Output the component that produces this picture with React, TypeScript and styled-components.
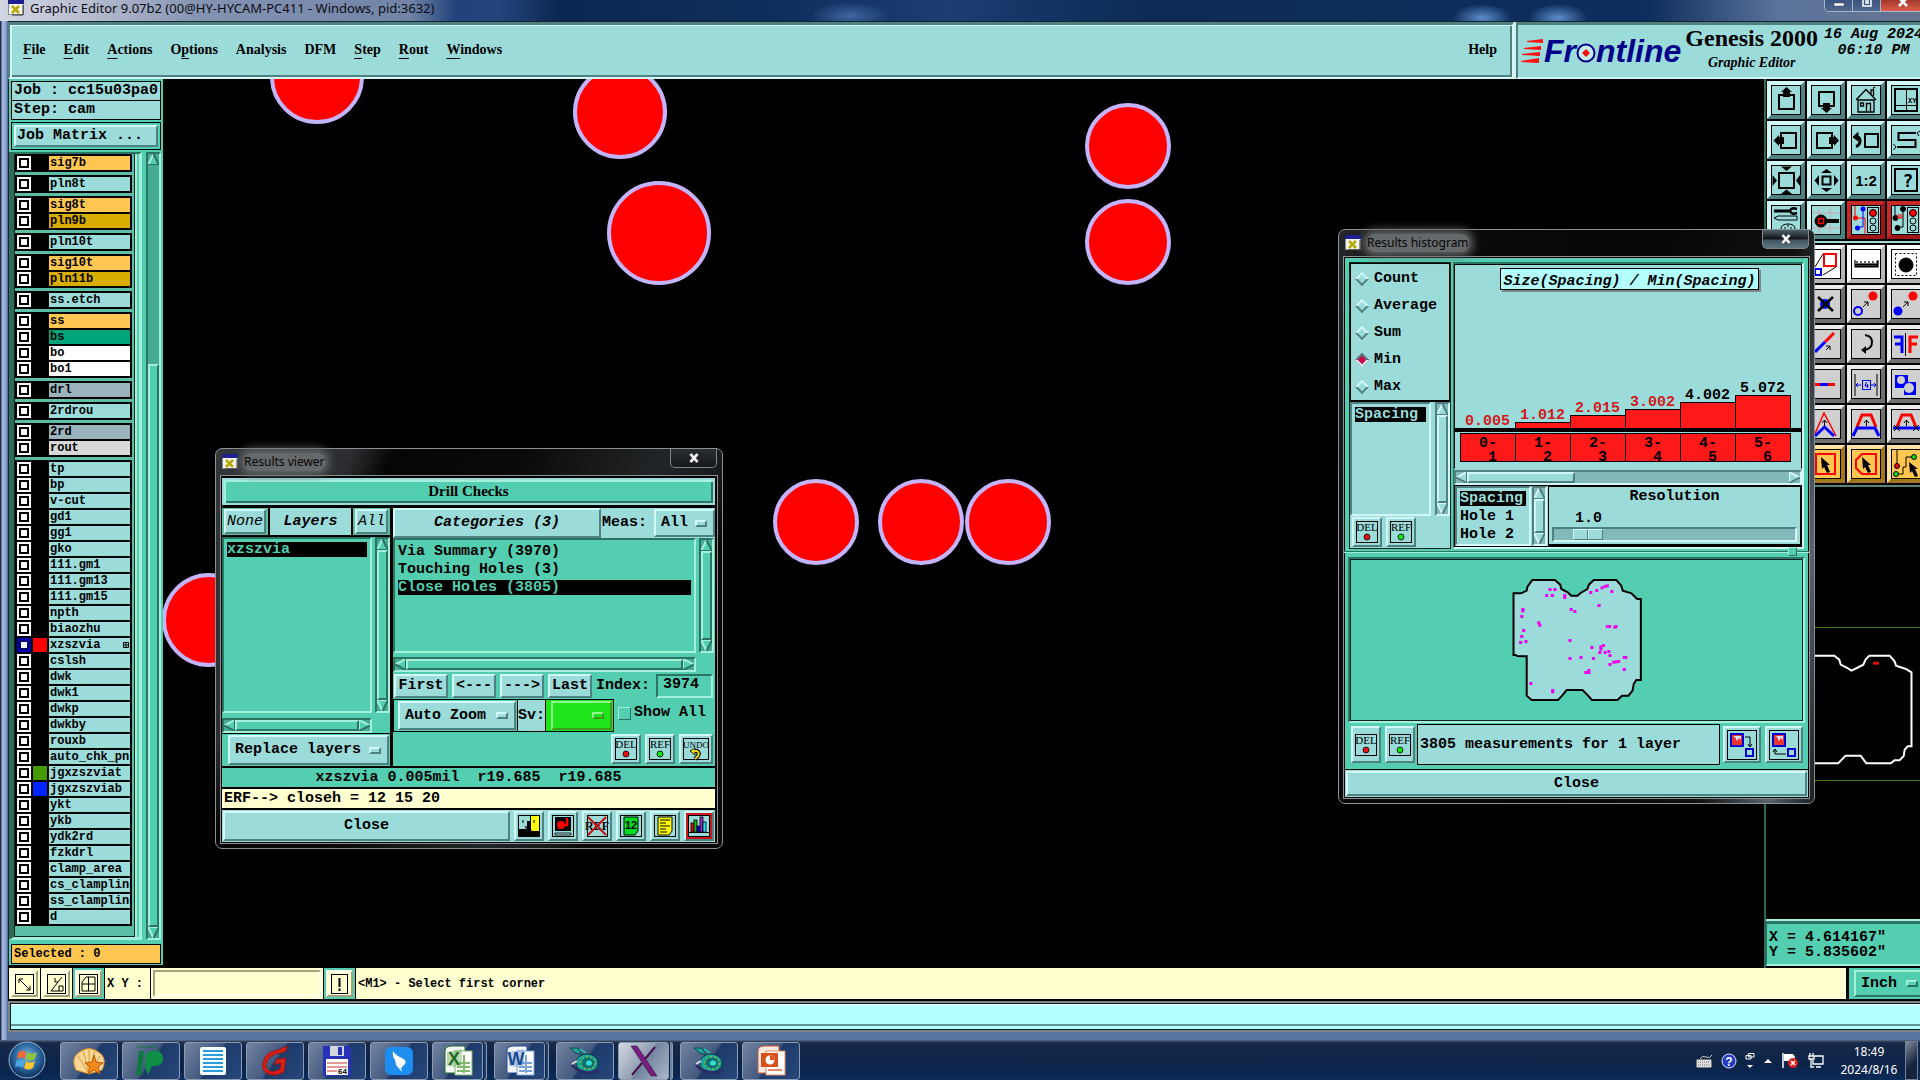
import React from 'react';
import styled, { createGlobalStyle, css } from 'styled-components';

const MONO = '"Liberation Mono", "Courier New", monospace';
const SERIF = '"Liberation Serif", "Times New Roman", serif';
const UI = '"Noto Sans", "Open Sans", sans-serif';

type Tone = { face: string; hi: string; lo: string; trough: string };
const TONES: Record<string, Tone> = {
  aqua: { face: '#9bdbda', hi: '#d2f8f7', lo: '#4f8183', trough: '#84b8ba' },
  green: { face: '#53ceb0', hi: '#a4f0dc', lo: '#2b7462', trough: '#45ab92' },
  lime: { face: '#1ee61a', hi: '#8ff58c', lo: '#3f9a1f', trough: '#1ab517' },
  cream: { face: '#ffffd0', hi: '#ffffef', lo: '#a3a384', trough: '#d0d0a0' },
  grey: { face: '#cfcfcf', hi: '#ededed', lo: '#6f6f6f', trough: '#aaaaaa' },
  white: { face: '#ffffff', hi: '#ffffff', lo: '#b5b5b5', trough: '#dddddd' },
  orange: { face: '#ffc651', hi: '#ffe2a2', lo: '#a37620', trough: '#dda030' },
  red: { face: '#9bdbda', hi: '#d2f8f7', lo: '#4f8183', trough: '#84b8ba' },
};
type ToneProp = { $tone?: string };
const toneOf = (p: ToneProp) => TONES[p.$tone ?? 'aqua'];

const raised = css<ToneProp>`
  border: 2px solid;
  border-color: ${(p) => `${toneOf(p).hi} ${toneOf(p).lo} ${toneOf(p).lo} ${toneOf(p).hi}`};
`;
const sunken = css<ToneProp>`
  border: 2px solid;
  border-color: ${(p) => `${toneOf(p).lo} ${toneOf(p).hi} ${toneOf(p).hi} ${toneOf(p).lo}`};
`;

const Global = createGlobalStyle`
  *, *::before, *::after { box-sizing: border-box; }
  html, body { margin: 0; background: #000; }
  body { font: bold 15px/18px ${MONO}; color: #000; overflow: hidden; }
  button, select, input { font: inherit; color: inherit; margin: 0; border-radius: 0; }
  button, select { cursor: default; }
  svg { display: block; }
  ul { list-style: none; margin: 0; padding: 0; }
`;

/* ---------- desktop and main window ---------- */

const Desktop = styled.div`
  position: relative;
  display: flex;
  flex-direction: column;
  min-height: 100vh;
  overflow: hidden;
  background: #000;
`;

const MainWindow = styled.div`
  flex: 1;
  display: flex;
  flex-direction: column;
  margin-right: -6px;
  padding: 0 0 8px 8px;
  background: linear-gradient(90deg, #1b2c4a 0, #1b2c4a 1px, #a9bbdc 2px, #8ca4d2 6px, #5a74a0 7px, #5a74a0 100%);
`;

const TitleBar = styled.header`
  display: flex;
  align-items: flex-start;
  height: 21px;
  margin-left: -8px;
  padding: 0 0 0 8px;
  background:
    radial-gradient(ellipse 40px 14px at 850px 16px, #3f669e, transparent),
    radial-gradient(ellipse 30px 14px at 1482px 18px, #5c8dc8, transparent),
    radial-gradient(ellipse 30px 14px at 1558px 18px, #5c8dc8, transparent),
    linear-gradient(90deg, #d3d6e2 0, #b6bccf 90px, #8593b2 200px, #7184a6 410px, #21427a 455px, #23457c 500px, #0a2751 560px, #0d2d5c 760px, #1b3d70 950px, #0b2a57 1150px, #0d2e5e 1650px, #5c749c 1780px, #66748f 1926px);
`;
const TitleText = styled.h1`
  flex: 1;
  margin: 0 0 0 6px;
  font: normal 13px/16px ${UI};
  color: #0b0b14;
`;
const CaptionButtons = styled.div`
  display: flex;
  height: 12px;
  border: 1px solid #a8b6cc;
  border-top: 0;
  border-radius: 0 0 0 5px;
  overflow: hidden;
`;
const CaptionButton = styled.button<{ $w: number; $close?: boolean }>`
  width: ${(p) => p.$w}px;
  padding: 0;
  border: 0;
  border-right: 1px solid #a8b6cc;
  display: flex;
  justify-content: center;
  background: ${(p) => (p.$close ? 'linear-gradient(#a3372b, #d9604c)' : 'linear-gradient(#3b5480, #4f6890)')};
`;

const MenuRow = styled.div`
  display: flex;
  height: 58px;
  border-top: 1px solid #16242c;
  background: #d2eeee;
`;
const MenuBar = styled.nav`
  flex: 1;
  display: flex;
  align-items: center;
  gap: 18px;
  margin-right: 2px;
  padding: 0 15px 3px 13px;
  font: bold 14px/18px ${SERIF};
  background: #9bdbda;
  border: solid;
  border-width: 3px 2px 2px 2px;
  border-color: #4f8183 #d2f8f7 #d2f8f7 #4f8183;
  box-shadow: inset 2px 1px 0 #d2f8f7, inset -2px -2px 0 #4f8183;
  u { text-decoration-thickness: 1px; text-underline-offset: 4px; }
`;
const MenuItem = styled.button<{ $end?: boolean }>`
  padding: 0;
  border: 0;
  background: none;
  ${(p) => p.$end && 'margin-left: auto;'}
`;
const Brand = styled.div`
  width: 410px;
  display: flex;
  align-items: flex-start;
  background: #9bdbda;
  border: solid;
  border-width: 3px 0 2px 2px;
  border-color: #4f8183 #d2f8f7 #d2f8f7 #4f8183;
`;
const LogoWord = styled.div`
  display: flex;
  align-items: center;
  padding: 9px 0 0 3px;
  font: italic bold 32px/34px "Liberation Sans", Arial, sans-serif;
  color: #00008b;
`;
const Product = styled.div`
  margin: 0 0 0 4px;
  text-align: center;
  font: bold 24px/26px ${SERIF};
  small { display: block; font: italic bold 14px/24px ${SERIF}; }
`;
const DateBox = styled.div`
  margin: 2px 0 0 6px;
  text-align: center;
  font-style: italic;
  line-height: 16px;
  white-space: pre;
`;

const Work = styled.main`
  flex: 1;
  display: flex;
  background: #000;
`;

/* ---------- layer sidebar ---------- */

const Sidebar = styled.aside`
  flex: none;
  width: 155px;
  display: flex;
  flex-direction: column;
  margin-bottom: 3px;
  padding: 2px 0 2px;
  background: #53ceb0;
  border-left: 1px solid #16242c;
`;
const InfoBox = styled.div<{ $fill?: string; $small?: boolean }>`
  margin: 0 2px -1px;
  padding: 0 1px 0 2px;
  height: 20px;
  font-size: ${(p) => (p.$small ? 12 : 15)}px;
  line-height: 18px;
  border: 1px solid #000;
  background: ${(p) => p.$fill ?? '#9bdbda'};
  white-space: nowrap;
  overflow: hidden;
`;
const MatrixFrame = styled.div`
  margin: 3px 2px 2px;
  padding: 2px;
  border: 1px solid #000;
`;
const MatrixButton = styled.button`
  ${raised}
  display: block;
  width: 100%;
  height: 22px;
  padding: 0 1px;
  text-align: left;
  line-height: 18px;
  background: #9bdbda;
`;
const LayerPanel = styled.div`
  flex: 1;
  display: flex;
  gap: 4px;
  margin-bottom: 4px;
  padding-right: 2px;
`;
const LayerFrame = styled.div`
  flex: 1;
  min-width: 0;
  padding-right: 4px;
  border: solid;
  border-width: 2px 3px 3px 5px;
  border-color: #2b7462 #a4f0dc #a4f0dc #2f6a5b;
`;
const LayerList = styled.div`
  height: 100%;
  display: flex;
  flex-direction: column;
  gap: 3px;
  padding-right: 2px;
  background: #5bbfa5;
  border: 1px solid #10251f;
  border-top: 0;
  box-shadow: 2px 0 0 #a4f0dc;
`;
const LayerGroup = styled.ul`
  display: flex;
  flex-direction: column;
  gap: 2px;
  padding: 2px;
  background: #000;
`;
const LayerRow = styled.li`
  display: flex;
  gap: 2px;
  height: 14px;
`;
const LayerCheck = styled.input<{ $active?: boolean }>`
  appearance: none;
  flex: none;
  width: 14px;
  height: 14px;
  background: #fff;
  border: 2px solid ${(p) => (p.$active ? '#0000b4' : '#fff')};
  box-shadow: inset 0 0 0 2px ${(p) => (p.$active ? '#00006e' : '#000')};
`;
const Swatch = styled.span<{ $color: string }>`
  flex: none;
  width: 14px;
  background: ${(p) => p.$color};
`;
const LayerName = styled.label<{ $fill: string }>`
  flex: 1;
  display: flex;
  justify-content: space-between;
  align-items: center;
  min-width: 0;
  padding-left: 1px;
  font-size: 12px;
  line-height: 14px;
  background: ${(p) => p.$fill};
  overflow: hidden;
  white-space: nowrap;
`;

/* ---------- shared Motif parts ---------- */

const BarTrack = styled.div<ToneProp & { $v: boolean }>`
  ${sunken}
  flex: none;
  display: flex;
  flex-direction: ${(p) => (p.$v ? 'column' : 'row')};
  ${(p) => (p.$v ? 'width: 15px;' : 'height: 15px;')}
  background: ${(p) => toneOf(p).trough};
`;
const BarArrow = styled.button`
  flex: none;
  padding: 0;
  border: 0;
  width: 11px;
  height: 11px;
  background: none;
`;
const BarThumb = styled.div<ToneProp & { $grow: number }>`
  ${raised}
  flex: ${(p) => p.$grow} 1 0;
  margin: 0;
  background: ${(p) => toneOf(p).face};
`;
const BarSpace = styled.div<{ $grow: number }>`
  flex: ${(p) => p.$grow} 1 0;
`;

const ARROWS: Record<string, [string, string, string]> = {
  up: ['M5.5 0L11 11H0Z', 'M0 11L5.5 0', 'M5.5 0L11 11H0'],
  down: ['M0 0H11L5.5 11Z', 'M5.5 11L0 0H11', 'M11 0L5.5 11'],
  left: ['M11 0V11L0 5.5Z', 'M0 5.5L11 0', 'M11 0V11L0 5.5'],
  right: ['M0 0L11 5.5L0 11Z', 'M0 11V0L11 5.5', 'M11 5.5L0 11'],
};
function Arrow({ dir, tone }: { dir: string; tone: string }) {
  const t = TONES[tone];
  const [fill, hi, lo] = ARROWS[dir];
  return (
    <BarArrow aria-label={`Scroll ${dir}`}>
      <svg width="11" height="11" viewBox="0 0 11 11">
        <path d={fill} fill={t.face} />
        <path d={hi} fill="none" stroke={t.hi} strokeWidth="2" />
        <path d={lo} fill="none" stroke={t.lo} strokeWidth="2" />
      </svg>
    </BarArrow>
  );
}
function Scroll({ v = false, tone = 'aqua', before = 0, size = 1, after = 0 }: { v?: boolean; tone?: string; before?: number; size?: number; after?: number }) {
  return (
    <BarTrack $v={v} $tone={tone}>
      <Arrow dir={v ? 'up' : 'left'} tone={tone} />
      {before > 0 && <BarSpace $grow={before} />}
      <BarThumb $tone={tone} $grow={size} />
      {after > 0 && <BarSpace $grow={after} />}
      <Arrow dir={v ? 'down' : 'right'} tone={tone} />
    </BarTrack>
  );
}

const PushButton = styled.button<ToneProp & { $italic?: boolean; $light?: boolean; $grow?: boolean }>`
  ${raised}
  padding: 0 1px;
  line-height: 18px;
  white-space: nowrap;
  background: ${(p) => toneOf(p).face};
  ${(p) => p.$italic && 'font-style: italic;'}
  ${(p) => p.$light && 'font-weight: normal;'}
  ${(p) => p.$grow && 'flex: 1;'}
`;
const OptionBox = styled.div<ToneProp>`
  ${raised}
  display: flex;
  align-items: center;
  padding: 0 6px 0 5px;
  background: ${(p) => toneOf(p).face};
`;
const OptionSelect = styled.select`
  appearance: none;
  flex: 1;
  min-width: 0;
  padding: 0;
  border: 0;
  background: none;
  outline: none;
`;
const OptionMark = styled.span<ToneProp>`
  ${raised}
  width: 12px;
  height: 7px;
`;
function OptionMenu({ label, value, tone = 'aqua' }: { label: string; value: string; tone?: string }) {
  return (
    <OptionBox $tone={tone}>
      <OptionSelect aria-label={label} defaultValue={value}>
        <option>{value}</option>
      </OptionSelect>
      <OptionMark $tone={tone} />
    </OptionBox>
  );
}

const ListFrame = styled.ul<ToneProp & { $tight?: boolean }>`
  ${sunken}
  min-width: 0;
  padding: ${(p) => (p.$tight ? 3 : 4)}px 3px 2px 3px;
  display: flex;
  flex-direction: column;
  gap: 3px;
  background: ${(p) => toneOf(p).face};
`;
const ListChoice = styled.button<ToneProp & { $on?: boolean }>`
  display: block;
  width: 100%;
  height: 15px;
  padding: 0;
  border: 0;
  text-align: left;
  line-height: 15px;
  white-space: nowrap;
  background: ${(p) => (p.$on ? '#000' : 'none')};
  color: ${(p) => (p.$on ? toneOf(p).face : '#000')};
`;

const IconButton = styled.button<ToneProp & { $tall?: boolean; $w?: number; $alert?: boolean }>`
  ${raised}
  flex: none;
  width: ${(p) => p.$w ?? 30}px;
  height: ${(p) => (p.$tall ? 37 : 30)}px;
  padding: 0;
  display: flex;
  align-items: center;
  justify-content: center;
  background: ${(p) => (p.$alert ? '#c8191b' : '#9bdbda')};
`;

function TagIcon({ text, color }: { text: string; color: string }) {
  const w = text.length > 3 ? 28 : 24;
  return (
    <svg width={w} height="24" viewBox={`0 0 ${w} 24`} fontFamily={SERIF} fontSize={text.length > 3 ? 9 : 11} textAnchor="middle">
      <rect x="1.500" y="1.500" width={w - 3} height="21" fill="none" stroke="#000" />
      <text x={w / 2} y="11" fontWeight="normal">{text}</text>
      {color === 'undo' ? (
        <>
          <path d="M11 14H15Q18 16 16 19L13 22" fill="none" stroke="#000" strokeWidth="4" />
          <path d="M13 11L8 14L13 18Z" fill="#e8d810" stroke="#000" strokeWidth="0.800" />
          <path d="M11 14H15Q18 16 16 19L13 22" fill="none" stroke="#e8d810" strokeWidth="2" />
        </>
      ) : (
        <circle cx="12" cy="17" r="3" fill={color} stroke="#000" strokeWidth="0.800" />
      )}
    </svg>
  );
}

/* ---------- right toolbar ---------- */

const Viewport = styled.section`
  position: relative;
  flex: 1;
  min-width: 0;
  overflow: hidden;
  svg { position: absolute; left: 0; top: 0; }
`;
const Dock = styled.aside`
  flex: none;
  width: 162px;
  display: flex;
  flex-direction: column;
  border-left: 2px solid #2b6a5b;
`;
const ToolGrid = styled.div<{ $last?: boolean }>`
  display: grid;
  grid-template-columns: repeat(4, 38px);
  gap: 2px;
  padding: 2px 1px;
  background: #000;
  border-bottom: ${(p) => (p.$last ? '2px solid #53857c' : '2px solid #9bdbda')};
`;
const Tool = styled.button<ToneProp & { $alert?: boolean }>`
  width: 38px;
  height: 38px;
  padding: 0;
  display: flex;
  align-items: center;
  justify-content: center;
  border: 4px solid;
  border-color: ${(p) => (p.$alert ? '#c82828 #a01515 #a01515 #c82828' : `${toneOf(p).hi} ${toneOf(p).lo} ${toneOf(p).lo} ${toneOf(p).hi}`)};
  background: ${(p) => toneOf(p).face};
`;
const Overview = styled.div`
  flex: 1;
  display: flex;
  align-items: center;
`;
const OverviewBox = styled.div`
  flex: 1;
  display: flex;
  justify-content: flex-end;
  padding: 26px 13px 14px 0;
  border: solid #3c7d12;
  border-width: 1px 0;
`;
const Coords = styled.div`
  ${sunken}
  border-width: 3px 0 2px 1px;
  margin-bottom: 2px;
  padding: 6px 0 4px 2px;
  line-height: 15px;
  white-space: pre;
  background: #53ceb0;
  box-shadow: 0 -2px 0 #a4f0dc;
`;

const TOOLS: { tone: string; alert?: boolean; name: string; art: React.ReactNode }[] = [
  { tone: 'aqua', name: 'Pan up', art: <><rect x="8" y="10" width="15" height="14" fill="none" strokeWidth="2" /><path d="M15.5 2L21 7H19V12H12V7H10Z" fill="#000" stroke="none" /></> },
  { tone: 'aqua', name: 'Pan down', art: <><rect x="8" y="7" width="15" height="14" fill="none" strokeWidth="2" /><path d="M15.5 28L21 23H19V18H12V23H10Z" fill="#000" stroke="none" /></> },
  { tone: 'aqua', name: 'Home', art: <path d="M5 15L15 4.500L25 15M7 15H23V27H7ZM9.500 18H12.500V21H9.500ZM15.500 27V18.500H19.500V27M20 9V5H22.500V11M22 3.500L24 2" fill="none" strokeWidth="1.300" /> },
  { tone: 'aqua', name: 'Zoom XY', art: <><rect x="4" y="4" width="22" height="22" fill="none" strokeWidth="2" /><path d="M15.500 4V26M4 20.500H26" /><text x="17" y="18" fontSize="7" stroke="none">XY</text></> },
  { tone: 'aqua', name: 'Pan left', art: <><rect x="10" y="8" width="15" height="15" fill="none" strokeWidth="2" /><path d="M2.500 15.500L8 10V12H13V19H8V21Z" fill="#000" stroke="none" /></> },
  { tone: 'aqua', name: 'Pan right', art: <><rect x="6" y="8" width="15" height="15" fill="none" strokeWidth="2" /><path d="M28 15.500L23 10V12H18V19H23V21Z" fill="#000" stroke="none" /></> },
  { tone: 'aqua', name: 'Previous view', art: <><rect x="14" y="9" width="13" height="13" fill="none" strokeWidth="2" /><path d="M4 12H6.500Q9 13 9 16Q9 20 5 21.500" fill="none" strokeWidth="3" /><path d="M2 12L7 7.500V16Z" fill="#000" /></> },
  { tone: 'aqua', name: 'Serpentine', art: <><path d="M25 8H7.500V15H24.500V22H6" fill="none" strokeWidth="2" /><path d="M29 6L26 8L28 11M2.500 19L5 22L2.500 25" fill="none" /></> },
  { tone: 'aqua', name: 'Zoom in', art: <><rect x="8" y="8" width="15" height="15" fill="none" strokeWidth="2" /><path d="M10 1.500H21L15.500 6ZM10 29H21L15.500 24.500ZM1.500 10V21L6 15.500ZM29 10V21L25 15.500Z" fill="#000" stroke="none" /></> },
  { tone: 'aqua', name: 'Zoom out', art: <><rect x="11.500" y="11.500" width="8" height="8" fill="none" strokeWidth="2" /><path d="M10 8H21L15.500 4ZM10 23H21L15.500 27ZM8 10V21L3.500 15.500ZM23 10V21L27.500 15.500Z" fill="#000" stroke="none" /></> },
  { tone: 'aqua', name: 'Scale one to two', art: <text x="15" y="20.500" fontSize="15" textAnchor="middle" stroke="none" fontWeight="bold" fontFamily="Liberation Sans, sans-serif">1:2</text> },
  { tone: 'aqua', name: 'Help', art: <><rect x="4" y="4" width="22" height="22" fill="none" strokeWidth="2" /><text x="17" y="22" fontSize="18" textAnchor="middle" stroke="none" fontWeight="bold" fontFamily="DejaVu Sans Mono, monospace">?</text></> },
  { tone: 'aqua', name: 'Setup', art: <><path d="M3 6H18" strokeWidth="3" /><path d="M26 4Q20 2 19 6Q20 10 26 8" fill="none" strokeWidth="2.500" /><path d="M3 13L7 11H26V15H7Z" fill="none" /><ellipse cx="17" cy="23" rx="7" ry="4" fill="none" /><path d="M13 23H15M16 21H18M19 23H21" /></> },
  { tone: 'aqua', name: 'Snap', art: <><path d="M8 1V29M19 1V29M1 8H29M1 23H29" stroke="#d99" strokeWidth="0.800" /><circle cx="10" cy="16" r="6" fill="#000" /><path d="M15 16H28" strokeWidth="4" /><rect x="7.500" y="13.500" width="5" height="5" fill="#000" stroke="red" strokeWidth="1.500" /></> },
  { tone: 'red', alert: true, name: 'Online check', art: <><path d="M4 1V13H14V29" fill="none" stroke="red" /><circle cx="4.500" cy="13" r="2.500" fill="red" stroke="none" /><path d="M12 4V22H7" fill="none" stroke="#00f" /><circle cx="12" cy="4" r="2.500" fill="#00f" stroke="none" /><circle cx="6.500" cy="23" r="2.500" fill="#00f" stroke="none" /><rect x="16.500" y="2.500" width="11" height="25" fill="none" /><circle cx="22" cy="8" r="3.500" fill="red" /><circle cx="22" cy="16" r="3" fill="none" /><circle cx="22" cy="23" r="3" fill="none" /></> },
  { tone: 'red', alert: true, name: 'Online report', art: <><path d="M4 1V13M12 4V22H7" fill="none" /><circle cx="4.500" cy="13" r="2.500" fill="#000" /><path d="M6 13H11M7 9V13M9 9V13M11 9V13" stroke="red" /><circle cx="12" cy="4" r="2.500" fill="#000" /><circle cx="6.500" cy="23" r="2.500" fill="#000" /><rect x="16.500" y="2.500" width="11" height="25" fill="none" /><circle cx="22" cy="8" r="3.500" fill="red" /><circle cx="22" cy="16" r="3" fill="none" /><circle cx="22" cy="23" r="3" fill="none" /></> },
];
const EDIT_TOOLS: { tone: string; name: string; art: React.ReactNode }[] = [
  { tone: 'white', name: 'Select', art: <rect x="6" y="6" width="18" height="18" fill="none" /> },
  { tone: 'white', name: 'Resize', art: <><rect x="13" y="5" width="12" height="12" fill="none" stroke="red" strokeWidth="2" /><rect x="4" y="20" width="6" height="6" fill="none" stroke="#00f" strokeWidth="2" /><path d="M4 18L12 5M12 26L25 18" /></> },
  { tone: 'white', name: 'Ruler', art: <path d="M4 11V18H27V11M6 18V12M8 18V14M10 18V12M12 18V14M14 18V12M16 18V14M18 18V12M20 18V14M22 18V12M24 18V14M26 18V12M4 17H27M4 15.500H27" fill="none" strokeWidth="1.200" /> },
  { tone: 'white', name: 'Feature', art: <><rect x="4.500" y="4.500" width="21" height="22" fill="none" strokeDasharray="2 2" /><circle cx="15" cy="16" r="7" fill="#000" /></> },
  { tone: 'grey', name: 'Add', art: <path d="M5 15H25M15 5V25" /> },
  { tone: 'grey', name: 'Delete', art: <><circle cx="14" cy="15" r="5" fill="#00f" stroke="none" /><path d="M7 8L22 22M22 8L7 22" strokeWidth="2.500" /></> },
  { tone: 'grey', name: 'Copy', art: <><circle cx="22" cy="7" r="4.500" fill="red" stroke="none" /><circle cx="7" cy="22" r="4" fill="none" stroke="#00f" strokeWidth="2" /><path d="M12 18L17 13M13 13H17V17" fill="none" /></> },
  { tone: 'grey', name: 'Move', art: <><circle cx="22" cy="7" r="4.500" fill="red" stroke="none" /><circle cx="7" cy="22" r="4.500" fill="#00f" stroke="none" /><path d="M12 18L17 13M13 13H17V17" fill="none" /></> },
  { tone: 'grey', name: 'Line', art: <path d="M5 25L25 5" /> },
  { tone: 'grey', name: 'Stretch', art: <><path d="M14 13L23 4" stroke="red" strokeWidth="3" /><path d="M4 23L14 13" stroke="#00f" strokeWidth="3" /><path d="M15 21L19 17M15 17H19V21" fill="none" /></> },
  { tone: 'grey', name: 'Rotate', art: <><path d="M14 6Q21 7 21 13Q21 20 13 21" fill="none" strokeWidth="2" /><path d="M10 21L15 17V25Z" fill="#000" stroke="none" /></> },
  { tone: 'grey', name: 'Mirror', art: <><path d="M3 8H11V24M4 15H11" fill="none" stroke="#00f" strokeWidth="3" /><path d="M14.500 4V27" /><path d="M27 8H19V24M26 15H19" fill="none" stroke="red" strokeWidth="3" /></> },
  { tone: 'grey', name: 'Arc', art: <path d="M5 25Q5 5 25 5" fill="none" /> },
  { tone: 'grey', name: 'Split', art: <><path d="M2 15.500H24" stroke="red" strokeWidth="3" /><path d="M9 15.500H17" stroke="#00f" strokeWidth="3" /></> },
  { tone: 'grey', name: 'Distance', art: <><path d="M4 5V27M26 5V27" /><rect x="11.500" y="11.500" width="8" height="9" fill="none" stroke="#00f" /><path d="M15.500 13L14 17H17.500M5 16H10M7 14L5 16L7 18M20 16H25M23 14L25 16L23 18M16.500 15V19" fill="none" stroke="#00f" /></> },
  { tone: 'grey', name: 'Shapes', art: <><path d="M4 6H17V13H25V26H13V19H4Z" fill="#00f" stroke="none" /><circle cx="10" cy="11" r="4" fill="#cfcfcf" stroke="none" /><circle cx="18" cy="19" r="5" fill="#cfcfcf" stroke="none" /></> },
  { tone: 'grey', name: 'Corner', art: <path d="M5 25V5H25" fill="none" /> },
  { tone: 'grey', name: 'Peak', art: <><path d="M3 27L13 4L25 27" fill="none" stroke="red" strokeWidth="1.500" /><path d="M4 27L13.500 18L23 27" fill="none" stroke="#00f" strokeWidth="3" /><path d="M13.500 17V11M11 14L13.500 11L16 14" fill="none" /></> },
  { tone: 'grey', name: 'Shift segment', art: <><path d="M6 18L11 6H20L25 18" fill="none" stroke="red" strokeWidth="3" /><path d="M2 27L6 19H24L28 27" fill="none" stroke="#00f" strokeWidth="3" /><path d="M15.500 17V11M13 14L15.500 11L18 14" fill="none" /></> },
  { tone: 'grey', name: 'Shift ends', art: <><path d="M6 18L11 6H20L25 18" fill="none" stroke="red" strokeWidth="3" /><path d="M2 19H29" stroke="#00f" strokeWidth="3" /><path d="M15.500 17V11M13 14L15.500 11L18 14M3 16L9 22M9 16L3 22M22 16L28 22M28 16L22 22" fill="none" /></> },
  { tone: 'orange', name: 'Select point', art: <path d="M10 6L20 16H15L18 23L15 24L12 17L10 20Z" fill="#000" stroke="none" /> },
  { tone: 'orange', name: 'Select frame', art: <><rect x="5" y="5" width="19" height="20" fill="none" stroke="red" strokeWidth="2" /><path d="M10 8L19 16H16L19 23L16 24L13 18L11 20Z" fill="#000" stroke="none" /></> },
  { tone: 'orange', name: 'Select polygon', art: <><path d="M5 11L11 5H25V25H11L5 19Z" fill="none" stroke="red" strokeWidth="2" /><path d="M11 8L20 16H17L20 23L17 24L14 18L12 20Z" fill="#000" stroke="none" /></> },
  { tone: 'orange', name: 'Select net', art: <><path d="M6 1V16M6 25H12V18H15V8H22" fill="none" /><circle cx="6" cy="17" r="2.500" fill="red" /><circle cx="5" cy="25" r="2.500" fill="#1d1" /><circle cx="23" cy="8" r="2.500" fill="#1d1" /><path d="M18 13L27 20H24L27 27L24 28L21 22L19 24Z" fill="#000" stroke="none" /></> },
];

function ToolButton({ tone, name, art, alert }: { tone: string; name: string; art: React.ReactNode; alert?: boolean }) {
  return (
    <Tool $tone={tone} $alert={alert} aria-label={name}>
      <svg width="30" height="30" viewBox="0 0 30 30" stroke="#000" fill="#000">
        <rect x="0.500" y="0.500" width="29" height="29" fill="none" />
        {art}
      </svg>
    </Tool>
  );
}

/* ---------- command rows ---------- */

const CommandRow = styled.div`
  display: flex;
  height: 33px;
  padding: 0 0 2px 1px;
  gap: 1px;
  background: #000;
`;
const CommandCell = styled.div<ToneProp & { $grow?: boolean }>`
  display: flex;
  align-items: center;
  padding: 2px;
  font-size: 12px;
  background: ${(p) => toneOf(p).face};
  ${(p) => p.$grow && 'flex: 1;'}
`;
const CommandButton = styled.button<ToneProp>`
  ${raised}
  width: 27px;
  height: 27px;
  padding: 0;
  display: flex;
  align-items: center;
  justify-content: center;
  background: #ffffd0;
`;
const CommandLabel = styled.label`
  width: 41px;
  white-space: pre;
`;
const CommandInput = styled.input`
  ${sunken}
  width: 168px;
  height: 27px;
  padding: 0 4px;
  background: #ffffd0;
`;
const UnitCell = styled.div`
  width: 77px;
  display: flex;
  padding: 2px 0 2px 5px;
  margin-left: 2px;
  background: #53ceb0;
  > div { flex: 1; }
`;
const MessageStrip = styled.div`
  padding: 2px 0 2px 2px;
  background: #7d8585;
  div {
    height: 27px;
    background: #b3ffff;
    border: 1px solid #0d2024;
    box-shadow: inset 0 2px 0 #dcffff, inset 0 -3px 0 #b3ffff, inset 0 -5px 0 #5f9595;
  }
`;

/* ---------- floating windows ---------- */

const Floating = styled.section<{ $x: number; $y: number; $w: number; $glass: string }>`
  position: absolute;
  left: ${(p) => p.$x}px;
  top: ${(p) => p.$y}px;
  width: ${(p) => p.$w}px;
  padding: 0 4px 4px;
  border: 1px solid #8b9094;
  border-radius: 7px;
  background: ${(p) => p.$glass};
`;
const FloatTitle = styled.header`
  position: relative;
  display: flex;
  align-items: center;
  gap: 6px;
  height: 26px;
  padding-left: 2px;
  h2 {
    margin: 0;
    font: normal 12px/18px ${UI};
    color: #060606;
    background: #66696b;
    box-shadow: 0 0 10px 4px #66696b;
    border-radius: 8px;
  }
  > svg { position: relative; }
`;
const FloatClose = styled.button<{ $blue?: boolean }>`
  width: 47px;
  height: 19px;
  margin: 0 1px auto auto;
  padding: 0;
  display: flex;
  align-items: center;
  justify-content: center;
  border: 1px solid #7f878d;
  border-top: 0;
  border-radius: 0 0 5px 5px;
  background: ${(p) => (p.$blue ? 'linear-gradient(#4c626d, #71899500 50%, #3f555f 55%, #5d7580)' : 'linear-gradient(#2a2e32, #15181b)')};
`;
const FloatBody = styled.div<{ $fill: string }>`
  display: flex;
  flex-direction: column;
  border: 1px solid #8b9094;
  outline: 1px solid #000;
  outline-offset: -2px;
  padding: 1px;
  background: ${(p) => p.$fill};
`;

function XServerIcon() {
  return (
    <svg width="16" height="16" viewBox="0 0 16 16">
      <rect x="0.500" y="0.500" width="15" height="14" fill="#f4f4ee" stroke="#889" />
      <rect x="0" y="0" width="16" height="4" fill="#1f1f90" />
      <path d="M4 6L11 13M11 6L4 13" stroke="#b8a800" strokeWidth="2.500" />
      <path d="M4 15H15V5" stroke="#333" fill="none" />
    </svg>
  );
}
function CloseGlyph() {
  return (
    <svg width="12" height="10" viewBox="0 0 12 10">
      <path d="M2.500 1L9.500 9M9.500 1L2.500 9" stroke="#445" strokeWidth="4" />
      <path d="M2.500 1L9.500 9M9.500 1L2.500 9" stroke="#fff" strokeWidth="2.500" />
    </svg>
  );
}

/* results viewer */
const ViewerBody = styled(FloatBody)`
  gap: 2px;
  padding: 2px 2px 1px 1px;
`;
const Heading = styled.h3<ToneProp>`
  ${raised}
  margin: 0 0 1px;
  height: 27px;
  text-align: center;
  font: bold 15px/23px ${SERIF};
  background: #53ceb0;
  border-color: #9bdbda;
  box-shadow: inset 2px 2px 0 #a4f0dc, inset -2px -2px 0 #2b7462;
`;
const Columns = styled.div`
  display: flex;
  gap: 3px;
`;
const LayersCol = styled.div`
  width: 168px;
  display: flex;
  flex-direction: column;
  gap: 1px;
`;
const LayersHead = styled.div`
  display: flex;
  gap: 2px;
  height: 27px;
  margin-bottom: 1px;
`;
const GreenPad = styled.div`
  display: flex;
  padding: 1px 2px;
  background: #5bbfa5;
`;
const HeadLabel = styled.div`
  flex: 1;
  line-height: 27px;
  text-align: center;
  font-style: italic;
  background: #9bdbda;
`;
const ScrollArea = styled.div<{ $cols: string; $rows: string; $gap: string; $tone?: string }>`
  display: grid;
  grid-template-columns: ${(p) => p.$cols};
  grid-template-rows: ${(p) => p.$rows};
  gap: ${(p) => p.$gap};
  background: ${(p) => toneOf(p).face};
`;
const ReplaceRow = styled.div`
  display: flex;
  height: 32px;
  padding: 1px 1px 1px 6px;
  background: #53ceb0;
  > div { flex: 1; }
`;
const CategoriesCol = styled.div`
  flex: 1;
  min-width: 0;
  background: #53ceb0;
`;
const CategoriesHead = styled.div`
  display: flex;
  align-items: center;
  height: 30px;
  background: #9bdbda;
  > button { width: 208px; height: 30px; }
  > div { width: 61px; height: 28px; }
  > span { flex: 1; padding-left: 1px; }
`;
const NavRow = styled.div`
  display: flex;
  align-items: center;
  gap: 4px;
  padding: 2px 2px 1px 1px;
  > button { width: 44px; height: 24px; }
  > button:first-child { width: 54px; }
  label { margin-right: 2px; }
`;
const IndexInput = styled.input<ToneProp>`
  ${sunken}
  flex: 1;
  min-width: 0;
  height: 24px;
  padding: 0 5px 3px;
  background: #53ceb0;
`;
const ZoomRow = styled.div`
  display: flex;
  align-items: center;
  height: 33px;
`;
const ZoomBox = styled.div<{ $w: number; $fill?: string; $pad?: number }>`
  width: ${(p) => p.$w}px;
  height: 33px;
  display: flex;
  align-items: stretch;
  padding: 1px 1px 1px ${(p) => p.$pad ?? 4}px;
  border: 1px solid #000;
  background: ${(p) => p.$fill ?? '#53ceb0'};
  > div { flex: 1; }
`;
const SvLabel = styled.span`
  width: 27px;
  height: 33px;
  line-height: 31px;
  background: #9bdbda;
  border-block: 1px solid #000;
`;
const ShowAll = styled.label`
  display: flex;
  align-items: center;
  gap: 3px;
  margin: 0 0 5px 4px;
  input {
    appearance: none;
    width: 13px;
    height: 13px;
    border: 1px solid;
    border-color: #a4f0dc #2b7462 #2b7462 #a4f0dc;
  }
`;
const IconRow = styled.div`
  display: flex;
  justify-content: flex-end;
  gap: 4px;
  padding: 2px 2px 2px 0;
  svg { flex: none; }
`;
const Line = styled.div<{ $fill: string; $center?: boolean }>`
  height: 19px;
  padding: 0 2px;
  line-height: 20px;
  white-space: pre;
  text-align: ${(p) => (p.$center ? 'center' : 'left')};
  background: ${(p) => p.$fill};
`;
const FootRow = styled.div`
  display: flex;
  gap: 4px;
  padding: 1px;
  background: #9bdbda;
`;

function ResultsViewer() {
  return (
    <Floating $x={215} $y={448} $w={508} $glass="linear-gradient(115deg, #34373a 0, #2b2d30 20%, #050505 26%, #0a0a0a 45%, #222527 65%, #16181a 75%, #060606 80%, #0a0a0a 100%)">
      <FloatTitle>
        <XServerIcon />
        <h2>Results viewer</h2>
        <FloatClose aria-label="Close window"><CloseGlyph /></FloatClose>
      </FloatTitle>
      <ViewerBody $fill="#000">
        <Heading>Drill Checks</Heading>
        <Columns>
          <LayersCol>
            <LayersHead>
              <GreenPad><PushButton $italic $light>None</PushButton></GreenPad>
              <HeadLabel>Layers</HeadLabel>
              <GreenPad><PushButton $italic $light>All</PushButton></GreenPad>
            </LayersHead>
            <ScrollArea $tone="green" $cols="150px 15px" $rows="176px 15px" $gap="5px 3px">
              <ListFrame $tone="green" $tight>
                <li><ListChoice $tone="green" $on>xzszvia</ListChoice></li>
              </ListFrame>
              <Scroll v tone="green" />
              <Scroll tone="green" />
            </ScrollArea>
            <ReplaceRow><OptionMenu label="Layer action" value="Replace layers" /></ReplaceRow>
          </LayersCol>
          <CategoriesCol>
            <CategoriesHead>
              <PushButton $italic>Categories (3)</PushButton>
              <span>Meas:</span>
              <OptionMenu label="Measurements" value="All" />
            </CategoriesHead>
            <ScrollArea $tone="green" $cols="303px 15px" $rows="115px 15px" $gap="4px 3px">
              <ListFrame $tone="green">
                <li><ListChoice $tone="green">Via Summary (3970)</ListChoice></li>
                <li><ListChoice $tone="green">Touching Holes (3)</ListChoice></li>
                <li><ListChoice $tone="green" $on>Close Holes (3805)</ListChoice></li>
              </ListFrame>
              <Scroll v tone="green" />
              <Scroll tone="green" />
            </ScrollArea>
            <NavRow>
              <PushButton>First</PushButton>
              <PushButton>&lt;---</PushButton>
              <PushButton>---&gt;</PushButton>
              <PushButton>Last</PushButton>
              <label htmlFor="index">Index:</label>
              <IndexInput $tone="green" id="index" defaultValue="3974" />
            </NavRow>
            <ZoomRow>
              <ZoomBox $w={125}><OptionMenu label="Zoom mode" value="Auto Zoom" /></ZoomBox>
              <SvLabel>Sv:</SvLabel>
              <ZoomBox $w={69} $fill="#1ee61a" $pad={5}><OptionMenu label="Severity" value="" tone="lime" /></ZoomBox>
              <ShowAll><input type="checkbox" />Show All</ShowAll>
            </ZoomRow>
            <IconRow>
              <IconButton aria-label="Delete"><TagIcon text="DEL" color="#e81010" /></IconButton>
              <IconButton aria-label="Reference"><TagIcon text="REF" color="#12e612" /></IconButton>
              <IconButton $w={34} aria-label="Undo"><TagIcon text="UNDO" color="undo" /></IconButton>
            </IconRow>
          </CategoriesCol>
        </Columns>
        <Line $fill="#53ceb0" $center>{'xzszvia 0.005mil  r19.685  r19.685'}</Line>
        <Line $fill="#ffffd0">{'ERF--> closeh = 12 15 20'}</Line>
        <FootRow>
          <PushButton $grow>Close</PushButton>
          <IconButton aria-label="Compare">
            <svg width="22" height="22" viewBox="0 0 22 22"><rect width="22" height="22" /><rect x="1" y="1" width="8" height="13" fill="#9bdbda" /><rect x="13" y="1" width="8" height="15" fill="#ff0" /><path d="M5 5V8M7 11L8 13M16 5V8" stroke="#000" /><rect x="9" y="1" width="3" height="5" fill="#9bdbda" /><path d="M8 21V14L10 7H13V14L15 21" /></svg>
          </IconButton>
          <IconButton aria-label="Snapshot">
            <svg width="22" height="22" viewBox="0 0 22 22"><rect x="0.500" y="0.500" width="21" height="21" fill="none" stroke="#000" /><rect x="3" y="2" width="16" height="14" /><circle cx="9" cy="10" r="4" fill="red" /><path d="M9 10H15V3" stroke="red" strokeWidth="2.500" fill="none" /><path d="M3 18H19V20H3Z" fill="none" stroke="#000" strokeWidth="0.800" /></svg>
          </IconButton>
          <IconButton aria-label="Clear reference">
            <svg width="24" height="22" viewBox="0 0 24 22"><rect x="2.500" y="0.500" width="20" height="21" fill="none" stroke="#000" /><text x="12" y="15" fontFamily={SERIF} fontSize="12" textAnchor="middle">REF</text><path d="M3 2L21 20M21 2L3 20" stroke="#c11" strokeWidth="2" /></svg>
          </IconButton>
          <IconButton aria-label="Numbers">
            <svg width="22" height="22" viewBox="0 0 22 22"><rect x="0.500" y="0.500" width="21" height="21" fill="none" stroke="#000" /><path d="M4 2H18V16L15 20H4Z" fill="#0d2" stroke="#000" /><text x="11" y="14" fontFamily="Liberation Sans, sans-serif" fontSize="11" fontWeight="bold" textAnchor="middle">12</text></svg>
          </IconButton>
          <IconButton aria-label="Notes">
            <svg width="22" height="22" viewBox="0 0 22 22"><rect x="0.500" y="0.500" width="21" height="21" fill="none" stroke="#000" /><path d="M4 2H18V16L15 20H4Z" fill="#ff0" stroke="#000" /><path d="M6 5H16M6 8H12M6 11H16M6 14H12M6 17H13" stroke="#000" /></svg>
          </IconButton>
          <IconButton $alert aria-label="Histogram">
            <svg width="22" height="22" viewBox="0 0 22 22"><rect x="0.500" y="0.500" width="21" height="21" fill="#9bdbda" stroke="#000" /><g stroke="#000" strokeWidth="0.800"><rect x="3" y="8" width="3" height="9" fill="red" /><rect x="6" y="5" width="3" height="12" fill="#1b1" /><rect x="9" y="11" width="3" height="6" fill="#00f" /><rect x="12" y="2" width="3" height="15" fill="#a2c" /><rect x="15" y="7" width="3" height="10" fill="#1ef" /></g><path d="M1 17.500H21" stroke="#000" /></svg>
          </IconButton>
        </FootRow>
      </ViewerBody>
    </Floating>
  );
}

/* results histogram */
const HistoTop = styled.div`
  display: flex;
  gap: 2px;
  margin: 4px 4px 2px;
  height: 287px;
`;
const MeasureCol = styled.div`
  width: 102px;
  display: flex;
  flex-direction: column;
  background: #9bdbda;
  border: 1px solid #10251f;
`;
const RadioGroup = styled.fieldset`
  margin: 0;
  padding: 1px 0 0 4px;
  min-width: 0;
  border: solid #000;
  border-width: 1px 1px 2px 1px;
  label {
    display: flex;
    align-items: center;
    gap: 5px;
    height: 27px;
  }
  input {
    appearance: none;
    width: 10px;
    height: 10px;
    margin: 0 2px;
    transform: rotate(45deg);
    border: 2px solid;
    border-color: #d2f8f7 #4f8183 #4f8183 #d2f8f7;
    background: #9bdbda;
  }
  input:checked {
    border-color: #4f8183 #d2f8f7 #d2f8f7 #4f8183;
    background: #d0004a;
  }
`;
const PairRow = styled.div`
  display: flex;
  gap: 4px;
  padding: 1px 2px;
`;
const ChartCol = styled.div`
  flex: 1;
  min-width: 0;
  display: flex;
  flex-direction: column;
  border: solid;
  border-width: 2px 2px 2px 1px;
  border-color: #2b7462 #d2f8f7 #d2f8f7 #2b7462;
  background: #9bdbda;
`;
const ChartPane = styled.figure`
  margin: 0 0 1px;
  height: 205px;
  display: flex;
  flex-direction: column;
  border: 1px solid #000;
  border-bottom-color: #9bdbda;
`;
const ChartTitle = styled.figcaption`
  align-self: center;
  margin: 3px 0 auto 3px;
  padding: 0 2px;
  height: 22px;
  line-height: 25px;
  font-style: italic;
  white-space: nowrap;
  background: #b3ffff;
  border: 1px solid #000;
  box-shadow: 2px 2px 0 #7a8a8a;
`;
const Bars = styled.div`
  display: flex;
  align-items: flex-end;
  padding-left: 5px;
  border-bottom: 4px solid #000;
`;
const BarCol = styled.div<{ $red: boolean }>`
  width: 55px;
  text-align: center;
  line-height: 12px;
  color: ${(p) => (p.$red ? '#d21a1c' : '#000')};
`;
const BarFill = styled.div`
  margin-right: -1px;
  background: #ff1919;
  border: 1px solid #000;
  border-bottom: 0;
`;
const Ranges = styled.div`
  display: flex;
  margin: 1px 0 6px 5px;
`;
const RangeCell = styled.div`
  width: 56px;
  height: 29px;
  margin-right: -1px;
  padding: 3px 0 0 0;
  text-align: center;
  line-height: 14px;
  white-space: pre;
  background: #ff1919;
  border: 1px solid #000;
`;
const ResRow = styled.div`
  flex: 1;
  display: flex;
  min-height: 0;
  border: 1px solid #000;
  > ul { width: 76px; }
  > div:nth-child(2) { margin: 0 1px 0 1px; }
`;
const Resolution = styled.div`
  flex: 1;
  min-width: 0;
  display: flex;
  flex-direction: column;
  padding: 1px 3px 2px;
  border: 2px solid #000;
  border-width: 1px 1px 2px 1px;
  text-align: center;
  line-height: 18px;
  output { padding: 5px 0 0 23px; text-align: left; line-height: 16px; }
`;
const Slider = styled.input`
  ${sunken}
  appearance: none;
  width: 100%;
  height: 15px;
  margin: auto 0 0;
  background: #84b8ba;
  &::-webkit-slider-thumb {
    appearance: none;
    width: 30px;
    height: 11px;
    border: 1px solid;
    border-color: #d2f8f7 #4f8183 #4f8183 #d2f8f7;
    background: linear-gradient(90deg, #9bdbda 13px, #4f8183 13px, #4f8183 14px, #d2f8f7 14px, #d2f8f7 15px, #9bdbda 15px);
  }
`;
const Sash = styled.div`
  position: relative;
  height: 2px;
  margin: 0 -1px 4px;
  background: linear-gradient(#2b7462 50%, #a4f0dc 50%);
  &::after {
    content: '';
    position: absolute;
    right: 12px;
    top: -4px;
    width: 9px;
    height: 9px;
    background: #53ceb0;
    border: 1px solid;
    border-color: #a4f0dc #2b7462 #2b7462 #a4f0dc;
  }
`;
const MapFrame = styled.div`
  ${sunken}
  margin: 0 3px 1px;
  height: 166px;
  display: flex;
  align-items: center;
  justify-content: center;
  box-shadow: inset 0 0 0 1px #10251f;
`;
const ActionRow = styled.div`
  display: flex;
  align-items: center;
  gap: 4px;
  margin: 0 5px 4px 6px;
`;
const Measurement = styled.div`
  flex: 1;
  height: 41px;
  margin: 0 -1px 0 -2px;
  padding-left: 2px;
  line-height: 39px;
  border: 1px solid #000;
  background: #9bdbda;
`;
const CloseRow = styled.div`
  display: flex;
  margin: 0;
  padding: 1px;
  border-top: 1px solid #000;
  background: #9bdbda;
  > button { height: 25px; }
`;

const BINS = [
  { value: '0.005', range: '0-\n 1', height: 0, red: true },
  { value: '1.012', range: '1-\n 2', height: 6, red: true },
  { value: '2.015', range: '2-\n 3', height: 13, red: true },
  { value: '3.002', range: '3-\n 4', height: 19, red: true },
  { value: '4.002', range: '4-\n 5', height: 26, red: false },
  { value: '5.072', range: '5-\n 6', height: 33, red: false },
];
const DOTS = [
  [580, 147], [593, 147], [571, 165], [586, 165], [619, 165], [619, 171], [508, 207], [508, 211], [505, 228], [550, 247], [553, 254], [510, 270], [505, 288], [502, 306], [516, 303], [636, 207], [646, 213], [710, 195], [688, 156], [704, 150], [718, 142], [726, 138], [732, 136], [744, 153], [732, 258], [738, 258], [752, 260], [755, 258], [633, 300], [633, 354], [662, 351], [695, 354], [691, 321], [715, 319], [722, 315], [715, 326], [712, 336], [726, 336], [736, 333], [739, 345], [739, 372], [749, 365], [756, 364], [762, 363], [777, 351], [781, 351], [777, 387], [675, 396], [683, 390], [683, 396], [529, 429], [587, 450], [587, 454],
];

function MoveIcon({ up }: { up?: boolean }) {
  return (
    <svg width="30" height="30" viewBox="0 0 30 30">
      <rect x="0.500" y="0.500" width="29" height="29" fill="none" stroke="#000" />
      <rect x="4" y="4" width="12" height="12" fill="#e33" stroke="#00c" strokeWidth="2" />
      <path d="M6 6H14V10L12 8L10 11L8 7Z" fill="#cfe6f5" />
      <rect x="19" y="19" width="7" height="7" fill="#9bdbda" stroke="#00c" strokeWidth="2" />
      {up ? <path d="M17 24H6V20M4 22L6 19L8 22" fill="none" stroke="#000" /> : <path d="M18 7H23V16M21 14L23 17L25 14" fill="none" stroke="#000" />}
    </svg>
  );
}

function ResultsHistogram() {
  return (
    <Floating $x={1338} $y={229} $w={477} $glass="linear-gradient(100deg, #26282a 0, #0b0b0b 12%, #060606 55%, #111 80%, #56646f 92%, #1a1d20 100%)">
      <FloatTitle>
        <XServerIcon />
        <h2>Results histogram</h2>
        <FloatClose $blue aria-label="Close window"><CloseGlyph /></FloatClose>
      </FloatTitle>
      <FloatBody $fill="#53ceb0">
        <HistoTop>
          <MeasureCol>
            <RadioGroup aria-label="Statistic">
              {['Count', 'Average', 'Sum', 'Min', 'Max'].map((name) => (
                <label key={name}><input type="radio" name="stat" defaultChecked={name === 'Min'} />{name}</label>
              ))}
            </RadioGroup>
            <ScrollArea $cols="1fr 15px" $rows="114px" $gap="0 4px">
              <ListFrame $tight><li><ListChoice $on>Spacing</ListChoice></li></ListFrame>
              <Scroll v />
            </ScrollArea>
            <PairRow>
              <IconButton aria-label="Delete"><TagIcon text="DEL" color="#e81010" /></IconButton>
              <IconButton aria-label="Reference"><TagIcon text="REF" color="#12e612" /></IconButton>
            </PairRow>
          </MeasureCol>
          <ChartCol>
            <ChartPane>
              <ChartTitle>Size(Spacing) / Min(Spacing)</ChartTitle>
              <Bars>
                {BINS.map((b) => (
                  <BarCol key={b.value} $red={b.red}>
                    {b.value}
                    {b.height > 0 && <BarFill style={{ height: b.height }} />}
                  </BarCol>
                ))}
              </Bars>
              <Ranges>{BINS.map((b) => <RangeCell key={b.value}>{b.range}</RangeCell>)}</Ranges>
            </ChartPane>
            <Scroll size={105} after={217} />
            <ResRow>
              <ListFrame $tight>
                <li><ListChoice $on>Spacing</ListChoice></li>
                <li><ListChoice>Hole 1</ListChoice></li>
                <li><ListChoice>Hole 2</ListChoice></li>
              </ListFrame>
              <Scroll v />
              <Resolution>
                <label htmlFor="resolution">Resolution</label>
                <output htmlFor="resolution">1.0</output>
                <Slider id="resolution" type="range" min="0" max="100" defaultValue="9" />
              </Resolution>
            </ResRow>
          </ChartCol>
        </HistoTop>
        <Sash />
        <MapFrame $tone="green">
          <svg width="136" height="124" viewBox="475 117 361 372" preserveAspectRatio="none">
            <path
              d="M487 163H507L522 155L524 143L537 123H597L611 137L614 150L631 160L640 170H657L665 162L683 150L687 137L700 123H760L773 140L777 155L800 163L815 180H825V423H813L806 435L803 455L792 470H775L763 483H695L685 470L670 453H628L616 470L605 483H535L522 470V352L497 351L493 348H487Z"
              fill="#9bdbda" stroke="#000" strokeWidth="2" vectorEffect="non-scaling-stroke"
            />
            {DOTS.map(([x, y], i) => <rect key={i} x={x} y={y} width="8" height="9" fill="#ee00ee" />)}
          </svg>
        </MapFrame>
        <ActionRow>
          <IconButton $tall aria-label="Delete"><TagIcon text="DEL" color="#e81010" /></IconButton>
          <IconButton $tall aria-label="Reference"><TagIcon text="REF" color="#12e612" /></IconButton>
          <Measurement>3805 measurements for 1 layer</Measurement>
          <IconButton $tall $w={38} aria-label="Copy down"><MoveIcon /></IconButton>
          <IconButton $tall $w={38} aria-label="Copy up"><MoveIcon up /></IconButton>
        </ActionRow>
        <CloseRow><PushButton $grow>Close</PushButton></CloseRow>
      </FloatBody>
    </Floating>
  );
}

/* ---------- taskbar ---------- */

const Taskbar = styled.footer`
  display: flex;
  align-items: center;
  height: 40px;
  padding-left: 6px;
  border-top: 1px solid #4d5f7b;
  background: linear-gradient(#3a4a63 0, #16294a 2px, #0b2347 60%, #0a2a58 100%);
`;
const StartButton = styled.button`
  width: 42px;
  height: 39px;
  padding: 0;
  margin-right: 12px;
  border: 0;
  background: none;
`;
const TaskSlot = styled.div`
  display: flex;
  align-items: center;
  width: 62px;
`;
const TaskButton = styled.button<{ $on?: boolean; $stack?: boolean }>`
  width: ${(p) => (p.$stack ? 51 : 58)}px;
  height: 38px;
  padding: 0;
  display: flex;
  align-items: center;
  justify-content: center;
  border: 1px solid #8b9bb3;
  border-radius: 3px;
  background: ${(p) => (p.$on ? 'linear-gradient(125deg, #d5dae2, #8f9cb1 50%, #7384a0 52%, #aab6c8)' : 'linear-gradient(125deg, #7385a3 0, #43597f 48%, #1d3a69 52%, #27487c 100%)')};
`;
const StackEdge = styled.span<{ $on?: boolean }>`
  width: 3px;
  height: 38px;
  margin-left: 1px;
  border: 1px solid #8b9bb3;
  border-left: 0;
  border-radius: 0 3px 3px 0;
  background: ${(p) => (p.$on ? '#7384a0' : '#1d3a69')};
`;
const Tray = styled.div`
  display: flex;
  align-items: center;
  gap: 8px;
  margin-left: auto;
`;
const Clock = styled.div`
  width: 72px;
  margin: 0;
  text-align: center;
  font: normal 12px/18px ${UI};
  color: #fff;
`;
const ShowDesktop = styled.button`
  width: 13px;
  height: 39px;
  margin-right: 2px;
  margin-left: -8px;
  padding: 0;
  border: 1px solid #71819b;
  background: linear-gradient(135deg, #7c8798, #16233c 60%);
`;

const Snail = () => (
  <svg width="34" height="32" viewBox="0 0 34 32">
    <path d="M2 3L8 8L14 10L10 3Z" fill="#1fa39a" stroke="#0a4a4a" /><path d="M12 4L18 8" stroke="#24b8aa" strokeWidth="2" />
    <ellipse cx="19" cy="18" rx="11" ry="9" fill="#1aa698" stroke="#083f46" /><ellipse cx="20" cy="18" rx="7" ry="6" fill="#0c7074" stroke="#c8d020" strokeDasharray="2 2" />
    <ellipse cx="21" cy="18" rx="3" ry="2.500" fill="#35e0d0" /><path d="M4 20Q14 31 31 26" stroke="#2a2f66" strokeWidth="3" fill="none" /><path d="M4 19L9 16" stroke="#ddd" strokeWidth="2" />
  </svg>
);
const office = (letter: string, color: string, light: string) => (
  <svg width="32" height="32" viewBox="0 0 32 32">
    <path d="M3 6Q3 1 10 1H23V28L3 28Z" fill="#f3f6f3" stroke={color} /><rect x="13" y="6" width="17" height="24" fill="#fff" stroke={light} />
    <path d="M15 18H28M15 22H28M15 26H28M22 10V28" stroke={light} strokeWidth="2" /><path d="M5 7L20 4V23L5 21Z" fill={light} opacity="0.5" />
    <text x="12" y="20" fontFamily="Liberation Sans, sans-serif" fontWeight="bold" fontSize="18" textAnchor="middle" fill={color}>{letter}</text>
  </svg>
);
const TASKS: { name: string; on?: boolean; stack?: boolean; art: React.ReactNode }[] = [
  { name: 'Shell', art: <svg width="34" height="30" viewBox="0 0 34 30"><path d="M17 28L4 24Q-1 14 5 8Q17 -3 29 8Q35 14 30 24Z" fill="#f8d79a" stroke="#d98c1f" /><path d="M17 28L6 10M17 28L11 4M17 28L17 2M17 28L23 4M17 28L28 10" stroke="#e09a2c" /><path d="M22 9L24 16L31 17L26 21L28 28L22 24L16 28L18 21L13 17L20 16Z" fill="#f28a1c" stroke="#b85c08" /></svg> },
  { name: 'Paint', art: <svg width="34" height="32" viewBox="0 0 34 32"><path d="M3 2H22L26 6" stroke="#0b7a38" fill="none" /><path d="M5 6H10L7 30H2Z" fill="#0c7a3a" /><path d="M12 8Q26 2 29 12Q30 22 18 21L14 30L11 22Z" fill="#0e8f45" /></svg> },
  { name: 'Notes', art: <svg width="28" height="30" viewBox="0 0 28 30"><rect x="1" y="1" width="26" height="28" rx="2" fill="#f2fbff" /><path d="M4 5H24M4 9H24M4 13H24M4 17H24M4 21H24M4 25H24" stroke="#2d9bd6" strokeWidth="2" /></svg> },
  { name: 'Gear', art: <svg width="34" height="32" viewBox="0 0 34 32"><path d="M24 3L30 1L27 7L18 9Q9 12 8 20Q9 28 17 26L22 24L23 18L16 20L19 14L28 13L26 27Q18 32 10 29Q3 26 5 17Q8 6 20 5Z" fill="#d42018" stroke="#8e0e08" strokeWidth="0.700" /></svg> },
  { name: 'Total', art: <svg width="32" height="34" viewBox="0 0 32 34"><path d="M2 2H28L30 4V32H2Z" fill="#2732b8" /><rect x="9" y="2" width="14" height="10" fill="#d3d8de" /><rect x="17" y="3" width="4" height="8" fill="#2732b8" /><rect x="5" y="15" width="22" height="16" fill="#fff" /><path d="M6 19H26M6 23H26M6 27H16" stroke="#c33" /><text x="17" y="30" fontSize="8" fontFamily="Liberation Sans, sans-serif">64</text></svg> },
  { name: 'Bird', art: <svg width="30" height="30" viewBox="0 0 30 30"><rect x="1" y="1" width="28" height="28" rx="6" fill="#1d8df2" /><path d="M9 5Q12 10 18 12Q23 14 21 18L17 22L18 26L12 19L11 14Q8 10 9 5Z" fill="#fff" /></svg> },
  { name: 'Excel', stack: true, art: office('X', '#1d6b28', '#7fb86a') },
  { name: 'Word', stack: true, art: office('W', '#1e4a92', '#7aa2d8') },
  { name: 'Incam', art: <Snail /> },
  { name: 'Exceed', on: true, stack: true, art: <svg width="32" height="32" viewBox="0 0 32 32"><path d="M3 1H9L29 31H23Z" fill="#7b1c84" stroke="#222" strokeWidth="0.600" /><path d="M27 2L17 14M14 18L4 30" stroke="#43104a" strokeWidth="2" /></svg> },
  { name: 'Genesis', art: <Snail /> },
  { name: 'Powerpoint', art: <svg width="32" height="32" viewBox="0 0 32 32"><path d="M3 6Q3 1 10 1H24V28L3 28Z" fill="#fbe9e2" stroke="#d05a30" /><rect x="11" y="6" width="19" height="24" fill="#fff" stroke="#e38b66" /><rect x="6" y="8" width="17" height="14" fill="#d8501c" /><circle cx="15" cy="15" r="4.500" fill="#fff" /><path d="M15 15V10.500A4.500 4.500 0 0 1 19.500 15Z" fill="#d8501c" /><path d="M13 25H27" stroke="#e38b66" strokeWidth="2" /></svg> },
];

/* ---------- data ---------- */

const AQUA = '#9bdbda';
const LAYERS: [string, string?, string?][][] = [
  [['sig7b', '#ffc651']],
  [['pln8t']],
  [['sig8t', '#ffc651'], ['pln9b', '#d9ac00']],
  [['pln10t']],
  [['sig10t', '#ffc651'], ['pln11b', '#d9ac00']],
  [['ss.etch']],
  [['ss', '#ffc651'], ['bs', '#00a47a'], ['bo', '#ffffff'], ['bo1', '#ffffff']],
  [['drl', '#9ab3bd']],
  [['2rdrou']],
  [['2rd', '#9ab3bd'], ['rout', '#d8d8d8']],
  [
    ['tp'], ['bp'], ['v-cut'], ['gd1'], ['gg1'], ['gko'], ['111.gm1'], ['111.gm13'], ['111.gm15'], ['npth'], ['biaozhu'],
    ['xzszvia', AQUA, '#ff0000'], ['cslsh'], ['dwk'], ['dwk1'], ['dwkp'], ['dwkby'], ['rouxb'], ['auto_chk_pnl'],
    ['jgxzszviat', AQUA, '#449a00'], ['jgxzszviab', AQUA, '#0026ff'], ['ykt'], ['ykb'], ['ydk2rd'], ['fzkdrl'], ['clamp_area'],
    ['cs_clampline'], ['ss_clampline'], ['d'],
  ],
];
const PADS = [
  [317, 77, 45], [620, 112, 45], [659, 233, 50], [1128, 146, 41], [1128, 242, 41], [816, 522, 41], [921, 522, 41], [1008, 522, 41], [209, 620, 45],
];
const MENUS: React.ReactNode[] = [
  <><u>F</u>ile</>, <><u>E</u>dit</>, <><u>A</u>ctions</>, <>O<u>p</u>tions</>, 'Analysis', 'DFM', <><u>S</u>tep</>, <><u>R</u>out</>, <><u>W</u>indows</>,
];

export default function App() {
  return (
    <Desktop>
      <Global />
      <MainWindow>
        <TitleBar>
          <XServerIcon />
          <TitleText>Graphic Editor 9.07b2 (00@HY-HYCAM-PC411 - Windows, pid:3632)</TitleText>
          <CaptionButtons>
            <CaptionButton $w={28} aria-label="Minimize"><svg width="12" height="8"><rect x="1" y="3" width="10" height="3" fill="#fff" stroke="#445" strokeWidth="0.500" /></svg></CaptionButton>
            <CaptionButton $w={28} aria-label="Restore"><svg width="12" height="8"><path d="M2 0V6H10V0M5 0V3H7V0" fill="none" stroke="#fff" strokeWidth="1.500" /></svg></CaptionButton>
            <CaptionButton $w={44} $close aria-label="Close"><svg width="12" height="8"><path d="M3 -1L10 6M9 -1L2 6" stroke="#fff" strokeWidth="2.500" /></svg></CaptionButton>
          </CaptionButtons>
        </TitleBar>
        <MenuRow>
          <MenuBar>
            {MENUS.map((m, i) => <MenuItem key={i}>{m}</MenuItem>)}
            <MenuItem $end>Help</MenuItem>
          </MenuBar>
          <Brand>
            <LogoWord>
              <svg width="23" height="24" viewBox="0 0 23 24"><path d="M6 2L22 0V4L6 3ZM3 9L20 7V11L3 10ZM1 15L19 13V17L1 16ZM0 22L18 19V24L0 23Z" fill="#ff1010" /></svg>
              Fr
              <svg width="20" height="24" viewBox="0 0 20 24"><circle cx="10" cy="14" r="8.500" fill="#c4eeee" stroke="#00008b" strokeWidth="2" /><path d="M10 10L14 14L10 18L6 14Z" fill="#f01010" /></svg>
              ntline
            </LogoWord>
            <Product>Genesis 2000<small>Graphic Editor</small></Product>
            <DateBox>{'16 Aug 2024\n06:10 PM'}</DateBox>
          </Brand>
        </MenuRow>
        <Work>
          <Sidebar>
            <InfoBox>Job : cc15u03pa0</InfoBox>
            <InfoBox>Step: cam</InfoBox>
            <MatrixFrame><MatrixButton>Job Matrix ...</MatrixButton></MatrixFrame>
            <LayerPanel>
              <LayerFrame>
                <LayerList>
                  {LAYERS.map((group, g) => (
                    <LayerGroup key={g}>
                      {group.map(([name, fill, swatch]) => (
                        <LayerRow key={name}>
                          <LayerCheck type="checkbox" id={`layer-${name}`} $active={name === 'xzszvia'} />
                          <Swatch $color={swatch ?? '#000'} />
                          <LayerName htmlFor={`layer-${name}`} $fill={fill ?? AQUA}>
                            {name}
                            {name === 'xzszvia' && <svg width="7" height="7" viewBox="0 0 7 7"><path d="M0.500 0.500H5.500V5.500H0.500ZM3 0.500V5.500M0.500 3H5.500" fill="none" stroke="#000" /></svg>}
                          </LayerName>
                        </LayerRow>
                      ))}
                    </LayerGroup>
                  ))}
                </LayerList>
              </LayerFrame>
              <Scroll v tone="green" before={200} size={561} />
            </LayerPanel>
            <InfoBox $fill="#ffc651" $small>Selected : 0</InfoBox>
          </Sidebar>
          <Viewport aria-label="Board view">
            <svg width="1601" height="889" viewBox="163 79 1601 889">
              {PADS.map(([x, y, r]) => <circle key={`${x}-${y}`} cx={x} cy={y} r={r} fill="#ff0000" stroke="#c3b4fb" strokeWidth="4" />)}
            </svg>
          </Viewport>
          <Dock>
            <ToolGrid>{TOOLS.map((t) => <ToolButton key={t.name} {...t} />)}</ToolGrid>
            <ToolGrid $last>{EDIT_TOOLS.map((t) => <ToolButton key={t.name} {...t} />)}</ToolGrid>
            <Overview>
              <OverviewBox>
                <svg width="134" height="112" viewBox="1193 343 356 336" preserveAspectRatio="none">
                  <path
                    d="M1207 388H1225L1241 380L1246 365L1260 348H1340L1353 360L1357 375L1375 385L1385 393L1400 385L1417 375L1423 360L1433 348H1487L1500 365L1504 378L1530 388L1545 398V620H1535L1527 630L1524 650L1513 662H1500L1490 671H1425L1410 648H1370L1350 671H1250L1241 660V552H1207Z"
                    fill="none" stroke="#fff" strokeWidth="2" vectorEffect="non-scaling-stroke"
                  />
                  <rect x="1443" y="366" width="16" height="9" fill="#e01010" />
                </svg>
              </OverviewBox>
            </Overview>
            <Coords $tone="green">{'X = 4.614167"\nY = 5.835602"'}</Coords>
          </Dock>
        </Work>
        <CommandRow>
          <CommandCell $tone="cream">
            <CommandButton $tone="cream" aria-label="Measure"><svg width="19" height="20" viewBox="0 0 19 20" fill="none" stroke="#000"><rect x="0.500" y="0.500" width="18" height="19" /><path d="M4 5L15 16M4 9V5H8M11 16H15V12" /></svg></CommandButton>
          </CommandCell>
          <CommandCell $tone="cream">
            <CommandButton $tone="cream" aria-label="Angle"><svg width="19" height="20" viewBox="0 0 19 20" fill="none" stroke="#000"><rect x="0.500" y="0.500" width="18" height="19" /><path d="M4 17L15 3M8 4V8H11M4 17H16V12H12V17" /></svg></CommandButton>
          </CommandCell>
          <CommandCell $tone="green">
            <CommandButton $tone="cream" aria-label="Grid"><svg width="19" height="20" viewBox="0 0 19 20" fill="none" stroke="#000"><rect x="0.500" y="0.500" width="18" height="19" /><path d="M3 17V8L7 3H16V17ZM9.500 3V17M3 10H16" /></svg></CommandButton>
          </CommandCell>
          <CommandCell $tone="cream"><CommandLabel htmlFor="xy">X Y :</CommandLabel></CommandCell>
          <CommandCell $tone="cream"><CommandInput $tone="cream" id="xy" /></CommandCell>
          <CommandCell $tone="green">
            <CommandButton $tone="cream" aria-label="Enter"><svg width="17" height="20" viewBox="0 0 17 20" fill="none" stroke="#000"><rect x="0.500" y="0.500" width="16" height="19" /><path d="M8.500 4V13M8.500 14.500V17" strokeWidth="2" /></svg></CommandButton>
          </CommandCell>
          <CommandCell $tone="cream" $grow>{'<M1> - Select first corner'}</CommandCell>
          <UnitCell><OptionMenu label="Units" value="Inch" tone="green" /></UnitCell>
        </CommandRow>
        <MessageStrip><div /></MessageStrip>
      </MainWindow>
      <Taskbar>
        <StartButton aria-label="Start">
          <svg width="42" height="39" viewBox="0 0 42 39">
            <defs><radialGradient id="orb" cx="0.500" cy="0.400" r="0.600"><stop offset="0" stopColor="#7fb8dc" /><stop offset="0.600" stopColor="#27639c" /><stop offset="1" stopColor="#0d2c55" /></radialGradient></defs>
            <circle cx="21" cy="19" r="18" fill="url(#orb)" stroke="#9cb8d4" />
            <path d="M12 12Q16 8 20 11L19 18Q15 15 11 18Z" fill="#ee6a3a" /><path d="M21 11Q25 14 31 11L29 18Q24 21 20 18Z" fill="#8cc63e" />
            <path d="M10 20Q14 17 19 20L17 27Q13 24 9 26Z" fill="#4aa5e0" /><path d="M20 20Q24 23 29 20L27 27Q22 30 18 27Z" fill="#fbc52c" />
          </svg>
        </StartButton>
        {TASKS.map((t) => (
          <TaskSlot key={t.name}>
            <TaskButton $on={t.on} $stack={t.stack} aria-label={t.name}>{t.art}</TaskButton>
            {t.stack && <StackEdge $on={t.on} />}
          </TaskSlot>
        ))}
        <Tray>
          <svg width="17" height="16" viewBox="0 0 17 16"><rect x="0.500" y="6.500" width="15" height="8" rx="1" fill="#ddd" stroke="#777" /><path d="M2 9H14M2 12H14" stroke="#777" strokeDasharray="1 1" /><path d="M4 6Q6 2 10 4T16 2" stroke="#ccc" fill="none" /></svg>
          <svg width="16" height="16" viewBox="0 0 16 16"><circle cx="8" cy="8" r="7" fill="#2438c0" stroke="#dfe6ff" /><text x="8" y="12.500" fontFamily="Liberation Sans, sans-serif" fontWeight="bold" fontSize="12" fill="#fff" textAnchor="middle">?</text></svg>
          <svg width="10" height="18" viewBox="0 0 10 18"><path d="M3.500 1.500H9V5H3.500ZM1 3.500H6V7H1Z" fill="none" stroke="#fff" /><path d="M2 13H8L5 16Z" fill="#fff" /></svg>
          <svg width="10" height="8" viewBox="0 0 10 8"><path d="M1 6L5 2L9 6Z" fill="#fff" /></svg>
          <svg width="18" height="18" viewBox="0 0 18 18"><path d="M2 1V16" stroke="#fff" strokeWidth="1.500" /><path d="M3 2H12L14 5V9H3Z" fill="#fff" /><circle cx="12" cy="11" r="5" fill="#d22" /><path d="M10 9L14 13M14 9L10 13" stroke="#fff" strokeWidth="1.500" /></svg>
          <svg width="18" height="18" viewBox="0 0 16 18"><path d="M6 4H15V12H5V8M8 15H13M2 1V4M5 1V4M1 4H6V7H1ZM3 7V15H6" fill="none" stroke="#fff" strokeWidth="1.300" /></svg>
          <Clock>18:49<br />2024/8/16</Clock>
          <ShowDesktop aria-label="Show desktop" />
        </Tray>
      </Taskbar>
      <ResultsViewer />
      <ResultsHistogram />
    </Desktop>
  );
}
